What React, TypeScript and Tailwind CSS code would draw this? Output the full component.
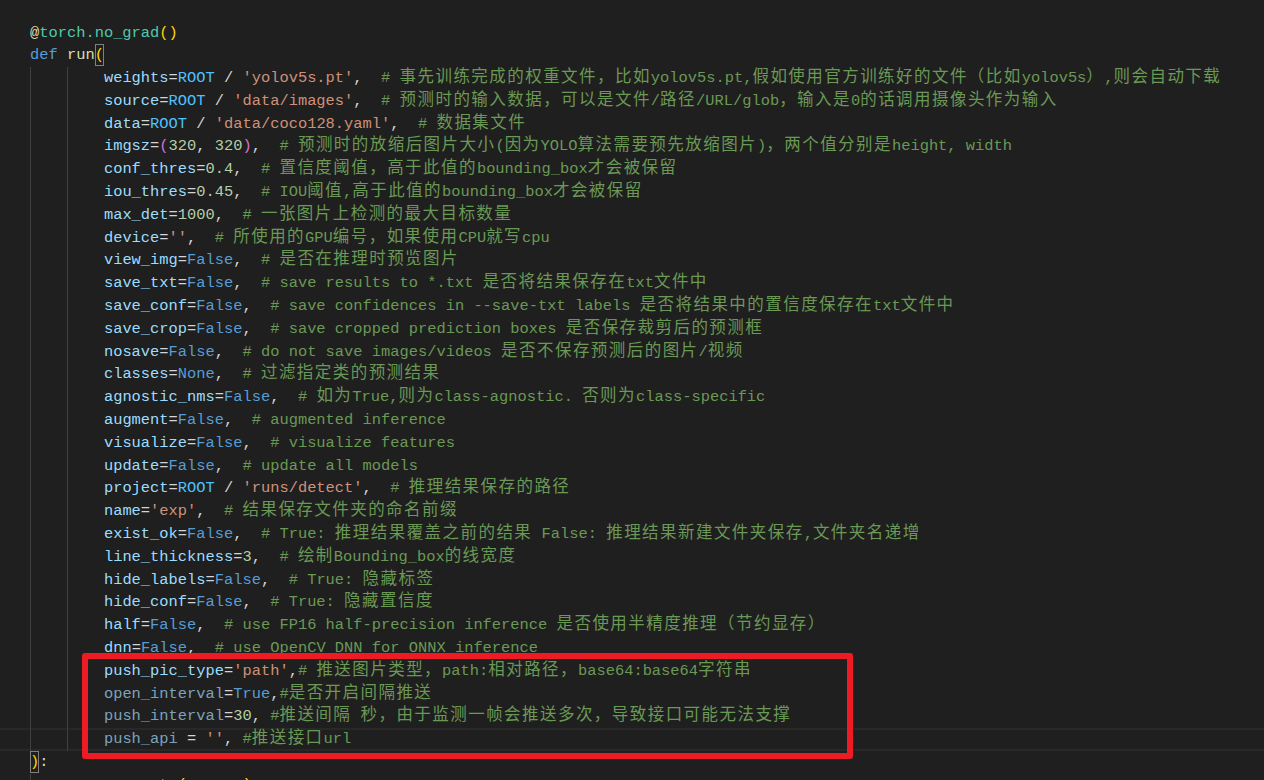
import React from 'react';

type Tok = [string, string];

const K: Record<string, string> = {
  p: 'text-[#9cdcfe]',
  pd: 'text-[#7ba3bb]',
  o: 'text-[#d4d4d4]',
  s: 'text-[#ce9178]',
  n: 'text-[#b5cea8]',
  k: 'text-[#569cd6]',
  r: 'text-[#4fc1ff]',
  f: 'text-[#dcdcaa]',
  t: 'text-[#4ec9b0]',
  b1: 'text-[#ffd700]',
  b2: 'text-[#da70d6]',
};

type Line = {
  indent: number;
  toks: Tok[];
  comment?: string;
  active?: boolean;
  boxParen?: 'run' | 'close';
};

const F: Tok = ['k', 'False'];

const lines: Line[] = [
  { indent: 0, toks: [['f', '@'], ['t', 'torch.no_grad'], ['b1', '()']] },
  { indent: 0, toks: [['k', 'def '], ['f', 'run']], boxParen: 'run' },
  {
    indent: 2,
    toks: [['p', 'weights'], ['o', '='], ['r', 'ROOT'], ['o', ' / '], ['s', "'yolov5s.pt'"], ['o', ',  ']],
    comment: '# 事先训练完成的权重文件，比如yolov5s.pt,假如使用官方训练好的文件（比如yolov5s）,则会自动下载',
  },
  {
    indent: 2,
    toks: [['p', 'source'], ['o', '='], ['r', 'ROOT'], ['o', ' / '], ['s', "'data/images'"], ['o', ',  ']],
    comment: '# 预测时的输入数据，可以是文件/路径/URL/glob，输入是0的话调用摄像头作为输入',
  },
  {
    indent: 2,
    toks: [['p', 'data'], ['o', '='], ['r', 'ROOT'], ['o', ' / '], ['s', "'data/coco128.yaml'"], ['o', ',  ']],
    comment: '# 数据集文件',
  },
  {
    indent: 2,
    toks: [['p', 'imgsz'], ['o', '='], ['b2', '('], ['n', '320'], ['o', ', '], ['n', '320'], ['b2', ')'], ['o', ',  ']],
    comment: '# 预测时的放缩后图片大小(因为YOLO算法需要预先放缩图片)，两个值分别是height, width',
  },
  {
    indent: 2,
    toks: [['p', 'conf_thres'], ['o', '='], ['n', '0.4'], ['o', ',  ']],
    comment: '# 置信度阈值，高于此值的bounding_box才会被保留',
  },
  {
    indent: 2,
    toks: [['p', 'iou_thres'], ['o', '='], ['n', '0.45'], ['o', ',  ']],
    comment: '# IOU阈值,高于此值的bounding_box才会被保留',
  },
  {
    indent: 2,
    toks: [['p', 'max_det'], ['o', '='], ['n', '1000'], ['o', ',  ']],
    comment: '# 一张图片上检测的最大目标数量',
  },
  {
    indent: 2,
    toks: [['p', 'device'], ['o', '='], ['s', "''"], ['o', ',  ']],
    comment: '# 所使用的GPU编号，如果使用CPU就写cpu',
  },
  { indent: 2, toks: [['p', 'view_img'], ['o', '='], F, ['o', ',  ']], comment: '# 是否在推理时预览图片' },
  {
    indent: 2,
    toks: [['p', 'save_txt'], ['o', '='], F, ['o', ',  ']],
    comment: '# save results to *.txt 是否将结果保存在txt文件中',
  },
  {
    indent: 2,
    toks: [['p', 'save_conf'], ['o', '='], F, ['o', ',  ']],
    comment: '# save confidences in --save-txt labels 是否将结果中的置信度保存在txt文件中',
  },
  {
    indent: 2,
    toks: [['p', 'save_crop'], ['o', '='], F, ['o', ',  ']],
    comment: '# save cropped prediction boxes 是否保存裁剪后的预测框',
  },
  {
    indent: 2,
    toks: [['p', 'nosave'], ['o', '='], F, ['o', ',  ']],
    comment: '# do not save images/videos 是否不保存预测后的图片/视频',
  },
  { indent: 2, toks: [['p', 'classes'], ['o', '='], ['k', 'None'], ['o', ',  ']], comment: '# 过滤指定类的预测结果' },
  {
    indent: 2,
    toks: [['p', 'agnostic_nms'], ['o', '='], F, ['o', ',  ']],
    comment: '# 如为True,则为class-agnostic. 否则为class-specific',
  },
  { indent: 2, toks: [['p', 'augment'], ['o', '='], F, ['o', ',  ']], comment: '# augmented inference' },
  { indent: 2, toks: [['p', 'visualize'], ['o', '='], F, ['o', ',  ']], comment: '# visualize features' },
  { indent: 2, toks: [['p', 'update'], ['o', '='], F, ['o', ',  ']], comment: '# update all models' },
  {
    indent: 2,
    toks: [['p', 'project'], ['o', '='], ['r', 'ROOT'], ['o', ' / '], ['s', "'runs/detect'"], ['o', ',  ']],
    comment: '# 推理结果保存的路径',
  },
  {
    indent: 2,
    toks: [['p', 'name'], ['o', '='], ['s', "'exp'"], ['o', ',  ']],
    comment: '# 结果保存文件夹的命名前缀',
  },
  {
    indent: 2,
    toks: [['p', 'exist_ok'], ['o', '='], F, ['o', ',  ']],
    comment: '# True: 推理结果覆盖之前的结果 False: 推理结果新建文件夹保存,文件夹名递增',
  },
  {
    indent: 2,
    toks: [['p', 'line_thickness'], ['o', '='], ['n', '3'], ['o', ',  ']],
    comment: '# 绘制Bounding_box的线宽度',
  },
  { indent: 2, toks: [['p', 'hide_labels'], ['o', '='], F, ['o', ',  ']], comment: '# True: 隐藏标签' },
  { indent: 2, toks: [['p', 'hide_conf'], ['o', '='], F, ['o', ',  ']], comment: '# True: 隐藏置信度' },
  {
    indent: 2,
    toks: [['p', 'half'], ['o', '='], F, ['o', ',  ']],
    comment: '# use FP16 half-precision inference 是否使用半精度推理（节约显存）',
  },
  {
    indent: 2,
    toks: [['p', 'dnn'], ['o', '='], F, ['o', ',  ']],
    comment: '# use OpenCV DNN for ONNX inference',
  },
  {
    indent: 2,
    toks: [['p', 'push_pic_type'], ['o', '='], ['s', "'path'"], ['o', ',']],
    comment: '# 推送图片类型，path:相对路径，base64:base64字符串',
  },
  {
    indent: 2,
    toks: [['pd', 'open_interval'], ['o', '='], ['k', 'True'], ['o', ',']],
    comment: '#是否开启间隔推送',
  },
  {
    indent: 2,
    toks: [['pd', 'push_interval'], ['o', '='], ['n', '30'], ['o', ', ']],
    comment: '#推送间隔 秒，由于监测一帧会推送多次，导致接口可能无法支撑',
  },
  {
    indent: 2,
    toks: [['pd', 'push_api'], ['o', ' = '], ['s', "''"], ['o', ', ']],
    comment: '#推送接口url',
    active: true,
  },
  { indent: 0, toks: [['o', ':']], boxParen: 'close' },
  {
    indent: 1,
    toks: [['p', 'source'], ['o', ' = '], ['t', 'str'], ['b1', '('], ['p', 'source'], ['b1', ')']],
  },
];

function Comment({ text }: { text: string }) {
  const parts = text.split(/([\u2E80-\u9FFF\u3000-\u303F\uFF00-\uFFEF]+)/);
  return (
    <span className="text-[#6a9955]">
      {parts.map((p, i) =>
        i % 2 === 1 ? (
          <span key={i} className="text-[16.5px] tracking-[1.45px]">
            {p}
          </span>
        ) : (
          <React.Fragment key={i}>{p}</React.Fragment>
        )
      )}
    </span>
  );
}

function Guide() {
  return <span className="inline-block h-[22.8px] align-top shadow-[inset_1px_0_0_#404040]">{'    '}</span>;
}

function BoxParen({ ch }: { ch: string }) {
  return (
    <span className="inline-block h-[22px] align-top text-[#ffd700] shadow-[inset_0_0_0_1px_#808080]">{ch}</span>
  );
}

export default function App() {
  return (
    <div
      className="relative w-[1264px] h-[780px] overflow-hidden bg-[#1f1f1f] pt-[21.5px] text-[15.4px] leading-[22.8px] font-['Liberation_Mono','Noto_Sans_CJK_SC',monospace]"
    >
      {lines.map((ln, i) => (
        <div
          key={i}
          className={
            'h-[22.8px] whitespace-pre pl-[30px] ' +
            (ln.active ? 'shadow-[inset_0_2px_0_#282828,inset_0_-2px_0_#282828]' : '')
          }
        >
          {Array.from({ length: ln.indent }).map((_, g) => (
            <Guide key={g} />
          ))}
          {ln.boxParen === 'close' && <BoxParen ch=")" />}
          {ln.toks.map((t, j) => (
            <span key={j} className={K[t[0]]}>
              {t[1]}
            </span>
          ))}
          {ln.boxParen === 'run' && <BoxParen ch="(" />}
          {ln.comment && <Comment text={ln.comment} />}
        </div>
      ))}
      <div className="absolute left-[82px] top-[653px] w-[771px] h-[106px] border-[6px] border-[#ed1c24] rounded-[3px]" />
    </div>
  );
}
